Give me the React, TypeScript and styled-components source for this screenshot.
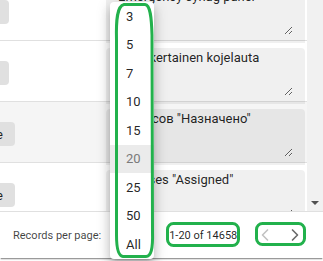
import React from 'react'
import styled, { createGlobalStyle } from 'styled-components'
import { ChevronLeft, ChevronRight } from 'lucide-react'

const GlobalStyle = createGlobalStyle`
  html, body {
    margin: 0;
    padding: 0;
    background: #fff;
    overflow: hidden;
  }
  body {
    font-family: Roboto, 'Liberation Sans', sans-serif;
    color: rgba(0, 0, 0, 0.87);
  }
`

const Screen = styled.div`
  position: relative;
  width: 323px;
  height: 261px;
  overflow: hidden;
`

const Card = styled.div`
  display: flex;
  flex-direction: column;
  height: 258px;
  background: #fff;
  box-shadow: 0 2px 1px -1px rgba(0, 0, 0, 0.3), 0 1px 2px 0 rgba(0, 0, 0, 0.2);
`

const TableArea = styled.div`
  display: flex;
  height: 211px;
`

const TableViewport = styled.div`
  width: 307px;
  overflow: hidden;
`

// scrolled down by 20px, first row is cut
const TableBody = styled.div`
  margin-top: -20px;
`

const Row = styled.div<{ $hover?: boolean }>`
  display: grid;
  grid-template-columns: 106px 201px;
  height: 60px;
  border-bottom: 1px solid #e0e0e0;
  background: ${p => (p.$hover ? '#f5f5f5' : '#fff')};
`

const ChipCell = styled.div<{ $end: number }>`
  display: flex;
  align-items: center;
  justify-content: flex-end;
  overflow: hidden;
  padding-right: ${p => 106 - p.$end}px;
  padding-top: 1px;
`

const Chip = styled.span`
  flex: none;
  display: inline-flex;
  align-items: center;
  height: 24px;
  padding: 0 12px;
  border-radius: 4px;
  background: #e0e0e0;
  font-size: 13px;
  white-space: nowrap;
`

const TextCell = styled.div`
  padding-right: 2px;
`

const TextBox = styled.div`
  height: 56px;
  padding: 0 12px;
  box-sizing: border-box;
  background: rgba(0, 0, 0, 0.06);
  border-radius: 4px 4px 0 0;
`

const Area = styled.textarea`
  display: block;
  width: 100%;
  height: 48px;
  margin: 7px 0 0;
  padding: 0;
  border: none;
  outline: none;
  background: transparent;
  resize: vertical;
  overflow: hidden;
  font-family: Roboto, 'Liberation Sans', sans-serif;
  font-size: 13px;
  line-height: 20px;
  color: rgba(0, 0, 0, 0.87);
`

const Scrollbar = styled.div`
  width: 16px;
  background: #f1f1f1;
  display: flex;
  flex-direction: column;
  justify-content: flex-end;
  align-items: center;
  padding-bottom: 6px;
  box-sizing: border-box;
`

const ScrollArrow = styled.div`
  width: 0;
  height: 0;
  border-left: 4px solid transparent;
  border-right: 4px solid transparent;
  border-top: 4px solid #505050;
`

const Footer = styled.div`
  display: flex;
  align-items: center;
  height: 46px;
  border-top: 1px solid #e0e0e0;
  padding: 0 18px 0 13px;
  font-size: 12px;
`

const Label = styled.span`
  font-size: 11px;
  color: rgba(0, 0, 0, 0.75);
  white-space: nowrap;
`

const SelectSlot = styled.div`
  flex: none;
  width: 58px;
  margin-left: 10px;
  font-size: 12px;
`

const PageText = styled.span`
  font-size: 11px;
  white-space: nowrap;
  color: rgba(0, 0, 0, 0.87);
`

const Pager = styled.div`
  display: flex;
  gap: 10px;
  margin-left: auto;
`

const PagerButton = styled.button<{ $disabled?: boolean }>`
  flex: none;
  width: 20px;
  height: 24px;
  padding: 0;
  border: none;
  background: none;
  display: flex;
  align-items: center;
  justify-content: center;
  color: ${p => (p.$disabled ? '#c2c2c2' : '#6a6a6a')};
`

const Menu = styled.div`
  position: absolute;
  left: 110px;
  top: 2px;
  width: 44px;
  background: #fff;
  border-radius: 4px;
  box-shadow: 0 5px 5px -3px rgba(0, 0, 0, 0.2), 0 8px 10px 1px rgba(0, 0, 0, 0.14),
    0 3px 14px 2px rgba(0, 0, 0, 0.12);
  z-index: 2;
`

const MenuItem = styled.div<{ $active?: boolean }>`
  display: flex;
  align-items: center;
  height: 28.5px;
  padding-left: 16px;
  font-size: 13px;
  background: ${p => (p.$active ? '#ebebeb' : 'transparent')};
  color: ${p => (p.$active ? '#7a7a7a' : 'rgba(0, 0, 0, 0.87)')};
`

const Marks = styled.svg`
  position: absolute;
  left: 0;
  top: 0;
  z-index: 3;
  pointer-events: none;
`

const rows = [
  { chip: 'Delete', end: 9, text: 'Emergency synag panel' },
  { chip: 'Delete', end: 9, text: 'Yksinkertainen kojelauta' },
  { chip: 'Assigne', end: 15, text: 'Статусов "Назначено"', hover: true },
  { chip: 'Assigne', end: 15, text: 'Statuses "Assigned"' },
]

const perPage = ['3', '5', '7', '10', '15', '20', '25', '50', 'All']

export default function App() {
  return (
    <Screen>
      <GlobalStyle />
      <Card>
        <TableArea>
          <TableViewport>
            <TableBody>
              {rows.map((r, i) => (
                <Row key={i} $hover={r.hover}>
                  <ChipCell $end={r.end}>
                    <Chip>{r.chip}</Chip>
                  </ChipCell>
                  <TextCell>
                    <TextBox>
                      <Area defaultValue={r.text} rows={2} />
                    </TextBox>
                  </TextCell>
                </Row>
              ))}
            </TableBody>
          </TableViewport>
          <Scrollbar>
            <ScrollArrow />
          </Scrollbar>
        </TableArea>
        <Footer>
          <Label>Records per page:</Label>
          <SelectSlot>20</SelectSlot>
          <PageText>1-20 of 14658</PageText>
          <Pager>
            <PagerButton $disabled>
              <ChevronLeft size={20} strokeWidth={2} />
            </PagerButton>
            <PagerButton>
              <ChevronRight size={20} strokeWidth={2} />
            </PagerButton>
          </Pager>
        </Footer>
      </Card>

      <Menu>
        {perPage.map(n => (
          <MenuItem key={n} $active={n === '20'}>
            {n}
          </MenuItem>
        ))}
      </Menu>

      <Marks width="323" height="261" viewBox="0 0 323 261">
        <g fill="none" stroke="#22b14c" strokeWidth="3" strokeLinejoin="round">
          <path d="M116.5 40 C116 20 117 6 124 4.5 L145 4.5 C150.5 5 151.5 18 152 35 L152.5 232 C153 249 151 256.5 146 256.5 L123 256.5 C118 256 116.5 248 116.5 235 Z" />
          <rect x="167.5" y="223.5" width="71" height="22" rx="6" />
          <rect x="256.5" y="223.5" width="48" height="21" rx="6" />
        </g>
      </Marks>
    </Screen>
  )
}
